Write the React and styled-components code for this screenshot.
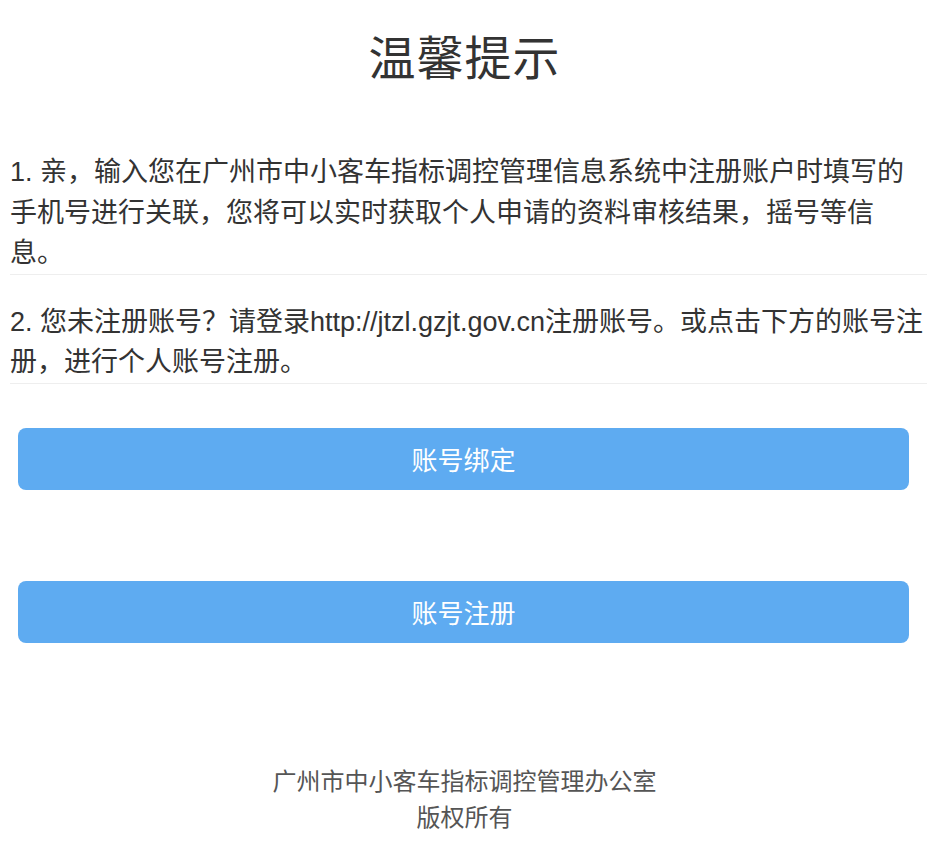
import styled, { createGlobalStyle } from 'styled-components';

const GlobalStyle = createGlobalStyle`
  html, body {
    margin: 0;
    padding: 0;
    background: #fff;
  }
  body {
    font-family: "Liberation Sans", "Noto Sans CJK SC", sans-serif;
    color: #333;
  }
`

const Page = styled.div`
  width: 929px;
  min-height: 854px;
  display: flex;
  flex-direction: column;
`
const Title = styled.h1`
  margin: 28px 0 0;
  font-family: "Noto Sans CJK SC", serif;
  font-weight: normal;
  font-size: 47px;
  line-height: 54px;
  text-align: center;
  color: #333;
  letter-spacing: 1px;
`
const Notes = styled.div`
  margin-top: 70px;
  padding: 0 2px 0 10px;
  display: flex;
  flex-direction: column;
`
const Note = styled.p`
  margin: 0;
  padding-top: ${(p) => (p.first ? '0' : '27px')};
  font-size: 27px;
  line-height: 40.5px;
  color: #333;
  border-bottom: 1px solid #eeeeee;
`
const Buttons = styled.div`
  margin-top: 44px;
  padding: 0 20px 0 18px;
  display: flex;
  flex-direction: column;
  gap: 91px;
`
const Button = styled.button`
  height: 62px;
  border: none;
  border-radius: 8px;
  background: #5eabf1;
  color: #fff;
  font-family: "Noto Sans CJK SC", sans-serif;
  font-size: 26px;
  cursor: pointer;
`
const Footer = styled.footer`
  margin-top: 119px;
  text-align: center;
  font-family: "Noto Sans CJK SC", sans-serif;
  font-size: 24px;
  line-height: 36px;
  color: #555;
`

const App = () => {
  return (
    <Page>
      <GlobalStyle />
      <Title>温馨提示</Title>
      <Notes>
        <Note first>
          1. 亲，输入您在广州市中小客车指标调控管理信息系统中注册账户时填写的手机号进行关联，您将可以实时获取个人申请的资料审核结果，摇号等信息。
        </Note>
        <Note>
          2. 您未注册账号？请登录http://jtzl.gzjt.gov.cn注册账号。或点击下方的账号注册，进行个人账号注册。
        </Note>
      </Notes>
      <Buttons>
        <Button>账号绑定</Button>
        <Button>账号注册</Button>
      </Buttons>
      <Footer>
        <div>广州市中小客车指标调控管理办公室</div>
        <div>版权所有</div>
      </Footer>
    </Page>
  )
}

export default App
